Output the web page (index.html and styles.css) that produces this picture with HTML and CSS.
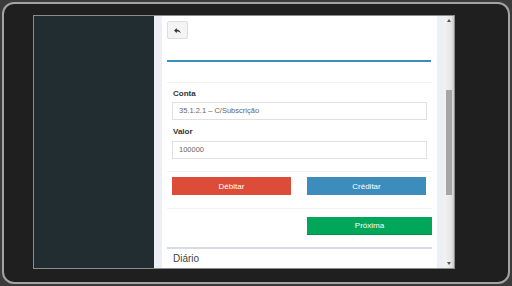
FILE: index.html
```html
<!DOCTYPE html>
<html lang="pt">
<head>
    <meta charset="UTF-8">
    <meta name="viewport" content="width=device-width, initial-scale=1.0">
    <title>Lançamento</title>
    <link rel="stylesheet" href="styles.css">
</head>
<body>
    <div class="device">
        <div class="screen">
            <aside class="sidebar"></aside>

            <div class="content-wrapper">
                <div class="box">
                    <button class="btn-back" title="Voltar">
                        <svg viewBox="0 0 24 24" width="9" height="9">
                            <path d="M10 9V5l-7 7 7 7v-4.1c5 0 8.5 1.6 11 5.1-1-5-4-10-11-11z" fill="#333"/>
                        </svg>
                    </button>

                    <div class="tab-line"></div>

                    <div class="form-section">
                        <label class="form-label">Conta</label>
                        <div class="form-input">35.1.2.1 – C/Subscrição</div>
                        <label class="form-label second">Valor</label>
                        <div class="form-input">100000</div>
                    </div>

                    <div class="btn-row">
                        <button class="btn btn-red">Débitar</button>
                        <button class="btn btn-blue">Créditar</button>
                    </div>

                    <div class="next-row">
                        <button class="btn btn-green">Próxima</button>
                    </div>

                    <div class="box-title">Diário</div>
                </div>
            </div>

            <div class="scrollbar">
                <span class="arrow-up"></span>
                <div class="thumb"></div>
                <span class="arrow-down"></span>
            </div>
        </div>
    </div>
</body>
</html>
```

FILE: styles.css
```css
* {
    box-sizing: border-box;
}
body {
    margin: 0;
    width: 512px;
    height: 286px;
    overflow: hidden;
    background: #3b3b3b;
    font-family: "Liberation Sans", Arial, sans-serif;
}
.device {
    margin: 2px 2px 0 2px;
    width: 508px;
    height: 282px;
    background: #1f1f1f;
    border: 2px solid #a3a3a3;
    border-radius: 12px;
    padding: 11px 0 0 29px;
}
.screen {
    width: 422px;
    height: 254px;
    border: 1px solid #8c8c8c;
    display: flex;
    overflow: hidden;
    background: #ecf0f5;
}
.sidebar {
    width: 120px;
    background: #222d32;
}
.content-wrapper {
    width: 290px;
    padding: 0 7px 0 8px;
    background: #ecf0f5;
}
.box {
    height: 100%;
    background: #fff;
    padding: 5px 5px 0 5px;
}
.btn-back {
    display: flex;
    align-items: center;
    justify-content: center;
    width: 21px;
    height: 18px;
    padding: 0;
    background: #f4f4f4;
    border: 1px solid #ddd;
    border-radius: 2px;
}
.tab-line {
    margin-top: 21px;
    height: 2px;
    background: #3c8dbc;
    width: 264px;
}
.form-section {
    margin-top: 20px;
    border-top: 1px solid #f2f2f2;
    border-bottom: 1px solid #f2f2f2;
    padding: 6px 5px 12px 5px;
}
.form-label {
    display: block;
    font-size: 8px;
    line-height: 10px;
    font-weight: bold;
    color: #333;
    padding-left: 1px;
    margin-bottom: 3px;
}
.form-label.second {
    margin-top: 7px;
    margin-bottom: 4px;
}
.form-input {
    height: 18px;
    border: 1px solid #e0e0e0;
    padding-left: 6px;
    font-size: 7.5px;
    line-height: 16px;
    color: #666;
}
.btn-row {
    display: flex;
    gap: 16px;
    padding: 5px 5px 13px 5px;
    border-bottom: 1px solid #f2f2f2;
}
.btn {
    height: 18px;
    border: none;
    color: #fff;
    font-family: "Liberation Sans", Arial, sans-serif;
    font-size: 8px;
    font-weight: normal;
    padding: 0;
}
.btn-row .btn {
    width: 119px;
}
.btn-red {
    background: #dd4b39;
}
.btn-blue {
    background: #3c8dbc;
}
.next-row {
    display: flex;
    justify-content: flex-end;
    padding: 8px 0 12px 0;
}
.btn-green {
    width: 125px;
    background: #00a65a;
    border-bottom: 1px solid #008d4c;
}
.box-title {
    border-top: 2px solid #d8dbe2;
    padding: 3px 0 0 6px;
    font-size: 10px;
    line-height: 14px;
    color: #444;
}
.scrollbar {
    position: relative;
    width: 10px;
    background: linear-gradient(to right, #f3f3f3, #e6e6e6 70%, #c8c8c8);
}
.thumb {
    position: absolute;
    top: 74px;
    left: 2px;
    width: 6px;
    height: 105px;
    background: #a6a6a6;
}
.arrow-up, .arrow-down {
    position: absolute;
    left: 3px;
    width: 0;
    height: 0;
    border-left: 2px solid transparent;
    border-right: 2px solid transparent;
}
.arrow-up {
    top: 3px;
    border-bottom: 3px solid #555;
}
.arrow-down {
    bottom: 3px;
    border-top: 3px solid #555;
}
```
